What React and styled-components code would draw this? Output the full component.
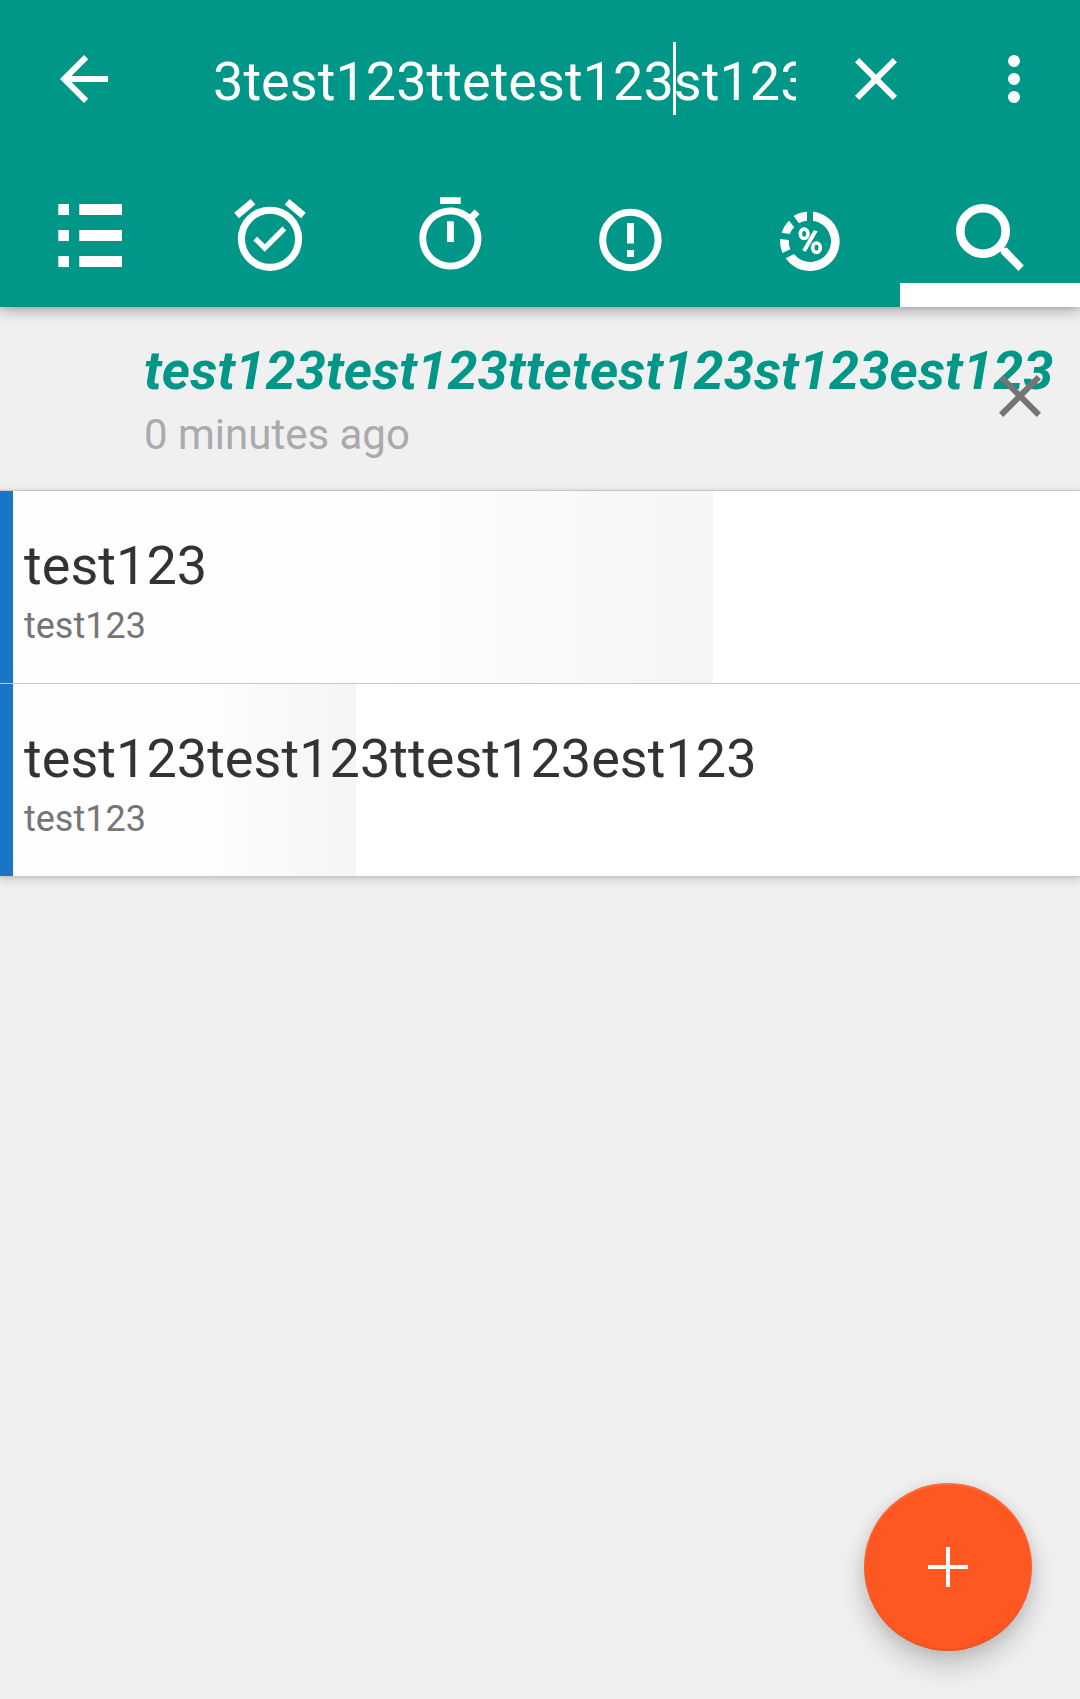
import React from "react";
import styled, { createGlobalStyle } from "styled-components";

const GlobalStyle = createGlobalStyle`
  *, *::before, *::after { box-sizing: border-box; }
  body {
    margin: 0;
    background: #f0f0f0;
    font-family: Roboto, "Noto Sans", sans-serif;
  }
`;

const Screen = styled.div`
  position: relative;
  width: 1080px;
  height: 1699px;
  overflow: hidden;
  display: flex;
  flex-direction: column;
  background: #f0f0f0;
`;

const Header = styled.header`
  flex: none;
  height: 307px;
  display: flex;
  flex-direction: column;
  background: #009688;
  box-shadow: 0 4px 14px rgba(0, 0, 0, 0.28), 0 2px 4px rgba(0, 0, 0, 0.08);
  z-index: 1;
`;

const Toolbar = styled.div`
  flex: none;
  height: 158px;
  display: flex;
  align-items: center;
  padding: 0 30px 0 48px;
`;

const IconButton = styled.button`
  flex: none;
  display: flex;
  width: 72px;
  height: 72px;
  margin: 0 ${(p) => p.$gapAfter || 0}px 0 ${(p) => p.$gapBefore || 0}px;
  padding: 0;
  border: 0;
  background: none;
  color: ${(p) => p.$color || "#fff"};
`;

const SearchField = styled.div`
  flex: none;
  width: 583px;
  height: 73px;
  margin: 0 0 1px 93px;
  overflow: hidden;
  display: flex;
  align-items: flex-start;
  color: #fff;
  font-size: 54px;
  letter-spacing: 0.04px;
  line-height: 79px;
  white-space: pre;
`;

const Caret = styled.span`
  position: relative;
  width: 0;
  height: 73px;

  &::after {
    content: "";
    position: absolute;
    top: 0;
    left: -1px;
    width: 3px;
    height: 73px;
    background: #fff;
  }
`;

const Tabs = styled.nav`
  flex: 1;
  display: grid;
  grid-template-columns: repeat(6, 1fr);
`;

const Tab = styled.button`
  display: flex;
  flex-direction: column;
  justify-content: space-between;
  padding: 22px 0 0;
  border: 0;
  background: none;
  color: #fff;

  &::after {
    content: "";
    width: 100%;
    height: 24px;
    background: ${(p) => (p.$active ? "#fff" : "transparent")};
  }
`;

const Glyph = styled.svg`
  display: block;
  width: ${(p) => p.$w || 72}px;
  height: ${(p) => p.$h || 72}px;
  fill: currentColor;
`;

const RecentQuery = styled.section`
  flex: none;
  height: 183px;
  display: flex;
  align-items: flex-start;
  padding: 31px 24px 0 144px;
`;

const QueryText = styled.div`
  width: 840px;
  white-space: nowrap;
`;

const QueryTitle = styled.div`
  font-size: 54px;
  font-style: italic;
  font-weight: 700;
  letter-spacing: 0.155px;
  line-height: 65px;
  color: #009688;
`;

const QueryAge = styled.div`
  font-size: 42px;
  line-height: 51px;
  margin-top: 6px;
  color: #aaa;
`;

const RemoveButton = styled(IconButton)`
  position: relative;
  margin-top: 22px;
`;

const List = styled.ul`
  flex: none;
  margin: 0;
  padding: 0;
  list-style: none;
  border-top: 1px solid #c8c8c8;
  box-shadow: 0 0 5px rgba(0, 0, 0, 0.12), 0 5px 8px rgba(0, 0, 0, 0.1);
`;

const Row = styled.li`
  height: 193px;
  padding: 42px 0 0 24px;
  border-bottom: 1px solid #c8c8c8;
  background:
    linear-gradient(#1976c7, #1976c7) 0 0 / 13px 100% no-repeat,
    linear-gradient(to right, #fefefe 52.5%, #f5f5f5 97.5%) 0 0 / ${(p) => p.$progress}px 100% no-repeat,
    #fff;
  background-clip: padding-box;
`;

const RowTitle = styled.div`
  font-size: 54px;
  letter-spacing: 0.04px;
  line-height: 65px;
  color: #333;
`;

const RowNote = styled.div`
  font-size: 36px;
  line-height: 42px;
  margin-top: 7px;
  color: #757575;
`;

const AddButton = styled.button`
  position: absolute;
  right: 48px;
  bottom: 48px;
  width: 168px;
  height: 168px;
  display: grid;
  place-items: center;
  padding: 0;
  border: 0;
  border-radius: 50%;
  background: #ff5722;
  color: #fff;
  box-shadow:
    0 14px 28px rgba(0, 0, 0, 0.2),
    0 2px 14px rgba(0, 0, 0, 0.08),
    inset 0 2px 2px rgba(255, 255, 255, 0.14),
    inset 0 -2px 2px rgba(0, 0, 0, 0.07);
`;

const CloseIcon = () => (
  <Glyph viewBox="0 0 24 24">
    <path d="M19 6.41L17.59 5 12 10.59 6.41 5 5 6.41 10.59 12 5 17.59 6.41 19 12 13.41 17.59 19 19 17.59 13.41 12z" />
  </Glyph>
);

const BackIcon = () => (
  <Glyph viewBox="0 0 24 24">
    <path d="M20 11H7.83l5.59-5.59L12 4l-8 8 8 8 1.41-1.41L7.83 13H20v-2z" />
  </Glyph>
);

const MoreIcon = () => (
  <Glyph viewBox="0 0 24 24">
    <circle cx="12" cy="6" r="2" />
    <circle cx="12" cy="12" r="2" />
    <circle cx="12" cy="18" r="2" />
  </Glyph>
);

/* Tab glyphs share a 180 x 100 canvas, the width of one tab. */
const TabGlyph = ({ children }) => (
  <Glyph $w={180} $h={100} viewBox="0 0 180 100">
    {children}
  </Glyph>
);

const ListGlyph = () => (
  <TabGlyph>
    {[24, 50, 76].map((y) => (
      <path key={y} d={`M58.3 ${y}h10.7v11H58.3zM79.3 ${y}H122v11H79.3z`} />
    ))}
  </TabGlyph>
);

const AlarmGlyph = () => (
  <TabGlyph>
    <path
      transform="translate(47.1 12.35) scale(3.575)"
      d="M10.54 14.53L8.41 12.4 7.35 13.46l3.18 3.18 6-6-1.06-1.06-4.93 4.95M12 20a7 7 0 0 1-7-7 7 7 0 0 1 7-7 7 7 0 0 1 7 7 7 7 0 0 1-7 7m0-16a9 9 0 0 0-9 9 9 9 0 0 0 9 9 9 9 0 0 0 9-9 9 9 0 0 0-9-9M7.88 3.39L6.6 1.86 2 5.71l1.29 1.53 4.59-3.85M22 5.72l-4.6-3.86-1.29 1.53 4.6 3.86L22 5.72z"
    />
  </TabGlyph>
);

const TimerGlyph = () => (
  <TabGlyph>
    <path
      transform="translate(49 13.7) scale(3.45)"
      d="M15 1H9v2h6V1zm-4 13h2V8h-2v6zm8.03-6.61l1.42-1.42c-.43-.51-.9-.99-1.41-1.41l-1.42 1.42C16.07 4.74 14.12 4 12 4c-4.97 0-9 4.03-9 9s4.02 9 9 9 9-4.03 9-9c0-2.12-.74-4.07-1.97-5.61zM12 20c-3.87 0-7-3.13-7-7s3.13-7 7-7 7 3.13 7 7-3.13 7-7 7z"
    />
  </TabGlyph>
);

const AlertGlyph = () => (
  <TabGlyph>
    <circle cx="90.4" cy="60" r="27.7" fill="none" stroke="currentColor" strokeWidth="7" />
    <path d="M87 43h7v20.5h-7zM87 70h7v7h-7z" />
  </TabGlyph>
);

const PercentGlyph = () => (
  <TabGlyph>
    <g transform="scale(0.33333)">
      <path d="M279 95.5A89 89 0 1 1 197 235L222 222A62 62 0 1 0 279 122.5z" />
      <path d="M180 177L207 180Q205 194 211 208L187 219Q179 199 180 177z" />
      <path d="M185 158Q191 138 207 122L223 142Q213 150 209 162z" />
      <path d="M221 108Q238 97 261 95.5V122.5Q248 123 237 130z" />
      <g fill="none" stroke="currentColor">
        <ellipse cx="252.5" cy="161.5" rx="11.5" ry="14" strokeWidth="11" />
        <ellipse cx="289.5" cy="203" rx="11.5" ry="14" strokeWidth="11" />
      </g>
      <path d="M281 151L293 154 257 216 247 210z" />
    </g>
  </TabGlyph>
);

const SearchGlyph = () => (
  <TabGlyph>
    <circle cx="83" cy="51" r="22.7" fill="none" stroke="currentColor" strokeWidth="8.6" />
    <path d="M100.3 68.2L107 67.8 123.8 85.5 118.4 91 101 73.5z" />
  </TabGlyph>
);

const tabs = [
  { name: "All", icon: ListGlyph },
  { name: "Due", icon: AlarmGlyph },
  { name: "Started", icon: TimerGlyph },
  { name: "Priority", icon: AlertGlyph },
  { name: "Progress", icon: PercentGlyph },
  { name: "Search", icon: SearchGlyph },
];

const results = [
  { title: "test123", note: "test123", progress: 713 },
  { title: "test123test123ttest123est123", note: "test123", progress: 356 },
];

export default function App() {
  return (
    <>
      <GlobalStyle />
      <Screen>
        <Header>
          <Toolbar>
            <IconButton>
              <BackIcon />
            </IconButton>
            <SearchField>
              <span>3test123ttetest123</span>
              <Caret />
              <span>st123</span>
            </SearchField>
            <IconButton $gapBefore={44} $gapAfter={66}>
              <CloseIcon />
            </IconButton>
            <IconButton>
              <MoreIcon />
            </IconButton>
          </Toolbar>
          <Tabs>
            {tabs.map(({ name, icon: Icon }) => (
              <Tab key={name} $active={name === "Search"}>
                <Icon />
              </Tab>
            ))}
          </Tabs>
        </Header>
        <RecentQuery>
          <QueryText>
            <QueryTitle>test123test123ttetest123st123est123</QueryTitle>
            <QueryAge>0 minutes ago</QueryAge>
          </QueryText>
          <RemoveButton $color="#757575">
            <CloseIcon />
          </RemoveButton>
        </RecentQuery>
        <List>
          {results.map((r) => (
            <Row key={r.title} $progress={r.progress}>
              <RowTitle>{r.title}</RowTitle>
              <RowNote>{r.note}</RowNote>
            </Row>
          ))}
        </List>
        <AddButton>
          <Glyph $w={40} $h={40} viewBox="0 0 40 40">
            <path d="M18 0h4v18h18v4H22v18h-4V22H0v-4h18z" />
          </Glyph>
        </AddButton>
      </Screen>
    </>
  );
}
